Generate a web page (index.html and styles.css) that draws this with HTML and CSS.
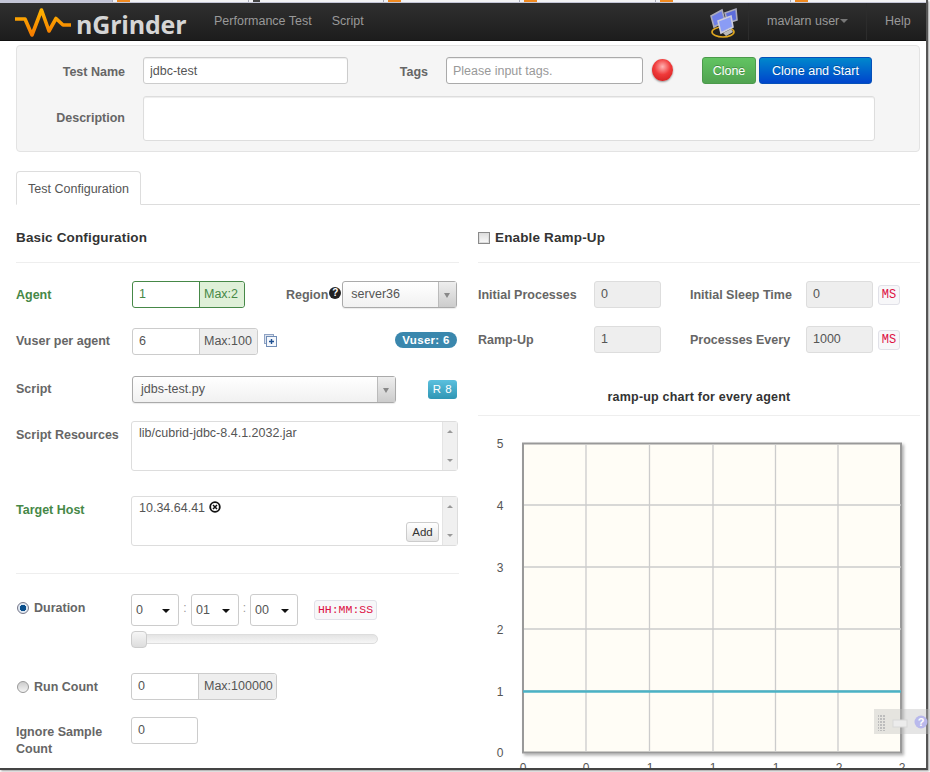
FILE: index.html
```html
<!DOCTYPE html>
<html lang="en">
<head>
<meta charset="utf-8">
<title>nGrinder</title>
<link rel="stylesheet" href="styles.css">
</head>
<body>
<div class="frame">
  <div class="browser-tabs">
    <span class="btab"><i class="fav"></i></span>
    <span class="btab"><i class="fav dark"></i></span>
    <span class="btab"><i class="fav"></i></span>
    <span class="btab"><i class="fav"></i></span>
    <span class="btab"><i class="fav"></i></span>
    <span class="btab"><i class="fav"></i></span>
  </div>
  <header class="navbar">
    <a class="brand">
      <svg class="logo" width="60" height="30" viewBox="0 0 60 30">
        <defs><linearGradient id="lg" x1="0" y1="0" x2="0" y2="1"><stop offset="0" stop-color="#ffb400"/><stop offset="1" stop-color="#f57c00"/></linearGradient></defs>
        <path d="M0 11H10L17 27L26.500 2L34 23L41 10.500L48 17H56" fill="none" stroke="url(#lg)" stroke-width="3.600" stroke-linejoin="round"/>
      </svg>
      <span class="brand-name">nGrinder</span>
    </a>
    <nav class="nav-links"><a>Performance Test</a><a>Script</a></nav>
    <div class="nav-right">
      <svg class="net-icon" width="32" height="32" viewBox="0 0 32 32">
        <ellipse cx="15" cy="25" rx="11" ry="5" fill="none" stroke="#e0a820" stroke-width="1.600"/>
        <path d="M3 9L14 3L17 14L6 20Z" fill="#6f7fe8" stroke="#aab" stroke-width="1.600"/>
        <path d="M17 6L28 2L29 13L20 16Z" fill="#5c6cdc" stroke="#aab" stroke-width="1.600"/>
        <path d="M10 14L23 9L25 20L13 26Z" fill="#8a9cf5" stroke="#ccd" stroke-width="1.600"/>
        <path d="M15 26L23 22L25 25L18 29Z" fill="#bbb"/>
      </svg>
      <a class="nav-user">mavlarn user<i class="caret"></i></a>
      <a class="nav-help">Help</a>
    </div>
  </header>
  <main class="content">
    <section class="well">
      <div class="well-row first">
        <label class="lbl well-lbl">Test Name</label>
        <input class="field name-field" value="jdbc-test">
        <label class="lbl tags-lbl">Tags</label>
        <input class="field tags-field" placeholder="Please input tags.">
        <span class="ball"></span>
        <button class="btn green">Clone</button>
        <button class="btn blue">Clone and Start</button>
      </div>
      <div class="well-row">
        <label class="lbl well-lbl desc-lbl">Description</label>
        <div class="field desc-field"></div>
      </div>
    </section>
    <div class="tabs"><a class="tab">Test Configuration</a></div>
    <div class="columns">
      <section class="col left">
        <h4 class="head">Basic Configuration</h4>
        <div class="row r-agent">
          <label class="lbl c1 ok">Agent</label>
          <div class="group ok"><span class="gi">1</span><span class="ga">Max:2</span></div>
          <label class="lbl region">Region</label><span class="help">?</span>
          <div class="select region-sel"><span>server36</span><b></b></div>
        </div>
        <div class="row r-vuser">
          <label class="lbl c1">Vuser per agent</label>
          <div class="group"><span class="gi">6</span><span class="ga">Max:100</span></div>
          <svg class="plus" width="13" height="13" viewBox="0 0 13 13"><rect x=".5" y=".5" width="9" height="9" fill="#dde3ee" stroke="#8fa3c4"/><rect x="2.500" y="2.500" width="10" height="10" fill="#f4f7fc" stroke="#6f8cb5"/><path d="M5 7.500H10M7.500 5V10" stroke="#1d4f91" stroke-width="1.400"/></svg>
          <span class="pill">Vuser: 6</span>
        </div>
        <div class="row r-script">
          <label class="lbl c1">Script</label>
          <div class="select script-sel"><span>jdbs-test.py</span><b></b></div>
          <span class="rev">R 8</span>
        </div>
        <div class="row r-res">
          <label class="lbl c1">Script Resources</label>
          <div class="listbox"><div class="list-text">lib/cubrid-jdbc-8.4.1.2032.jar</div><div class="sbar"><i class="up"></i><i class="down"></i></div></div>
        </div>
        <div class="row r-host">
          <label class="lbl c1 ok">Target Host</label>
          <div class="listbox"><div class="list-text">10.34.64.41 <svg class="x-icon" width="12" height="12" viewBox="0 0 12 12"><circle cx="6" cy="6" r="4.800" fill="none" stroke="#111" stroke-width="1.800"/><path d="M4 4L8 8M8 4L4 8" stroke="#111" stroke-width="1.500"/></svg></div><button class="add">Add</button><div class="sbar"><i class="up"></i><i class="down"></i></div></div>
        </div>
        <hr class="sep">
        <div class="row r-dur">
          <div class="c1 radio-lbl"><i class="radio on"></i><label class="lbl">Duration</label></div>
          <div class="dur-box">
            <div class="dur-row">
              <div class="mini"><span>0</span><b></b></div><span class="colon">:</span>
              <div class="mini"><span>01</span><b></b></div><span class="colon">:</span>
              <div class="mini"><span>00</span><b></b></div>
              <code class="code hms">HH:MM:SS</code>
            </div>
            <div class="slider"><i class="handle"></i></div>
          </div>
        </div>
        <div class="row r-run">
          <div class="c1 radio-lbl"><i class="radio"></i><label class="lbl">Run Count</label></div>
          <div class="group g-run"><span class="gi">0</span><span class="ga">Max:100000</span></div>
        </div>
        <div class="row r-ign">
          <label class="lbl c1 ign-lbl">Ignore Sample Count</label>
          <span class="box-input">0</span>
        </div>
      </section>
      <section class="col right">
        <h4 class="head ramp-head"><i class="check"></i>Enable Ramp-Up</h4>
        <div class="ramp-grid">
          <label class="lbl">Initial Processes</label><span class="box-input off">0</span>
          <label class="lbl">Initial Sleep Time</label><span class="box-input off">0</span><code class="code">MS</code>
          <label class="lbl">Ramp-Up</label><span class="box-input off">1</span>
          <label class="lbl">Processes Every</label><span class="box-input off">1000</span><code class="code">MS</code>
        </div>
        <h5 class="chart-title">ramp-up chart for every agent</h5>
        <svg class="chart" width="442" height="352" viewBox="0 0 442 352">
          <defs><filter id="sh" x="-2%" y="-2%" width="105%" height="105%"><feDropShadow dx="2" dy="2" stdDeviation="1.500" flood-color="#000" flood-opacity=".3"/></filter></defs>
          <rect x="45" y="27.500" width="378" height="309" fill="#fffdf6" stroke="#999" stroke-width="2" filter="url(#sh)"/>
          <g stroke="#ccc" stroke-width="1.300">
            <path d="M108 28V336M171.500 28V336M235 28V336M297.500 28V336M360 28V336"/>
            <path d="M46 89H423M46 151H423M46 213H423M46 275H423"/>
          </g>
          <path d="M45 275.500H423" stroke="#4bb2c5" stroke-width="2.400"/>
          <g class="tick" text-anchor="middle">
            <text x="22" y="32">5</text><text x="22" y="94">4</text><text x="22" y="156">3</text><text x="22" y="218">2</text><text x="22" y="280">1</text><text x="22" y="341">0</text>
            <text x="45" y="356">0</text><text x="108" y="356">0</text><text x="172" y="356">1</text><text x="235" y="356">1</text><text x="298" y="356">1</text><text x="361" y="356">2</text><text x="424" y="356">2</text>
          </g>
        </svg>
      </section>
    </div>
  </main>
</div>
<div class="float-bar">
  <svg width="56" height="25" viewBox="0 0 56 25">
    <defs><pattern id="dots" width="3" height="3" patternUnits="userSpaceOnUse"><rect width="2" height="2" fill="#bdbdbd"/></pattern></defs>
    <rect x="4" y="5" width="8" height="17" fill="url(#dots)"/>
    <rect x="19" y="11" width="14" height="7" fill="#ececec" stroke="#d8d8d8"/>
    <circle cx="47" cy="13" r="6.500" fill="#b9b9ec"/>
    <text x="47" y="17" class="q">?</text>
  </svg>
</div>
</body>
</html>
```
FILE: styles.css
```css
* { box-sizing: border-box; }
html, body { margin: 0; padding: 0; background: #fff; }
body { position: relative; width: 930px; height: 772px; overflow: hidden; font-family: "Liberation Sans", Arial, sans-serif; font-size: 12px; color: #555; }
.frame { position: relative; width: 928px; height: 770px; overflow: hidden; border-right: 2px solid #555; border-bottom: 2px solid #444; box-shadow: 1px 1px 2px #999; }

.browser-tabs { display: flex; height: 3px; padding-left: 112px; background: #c3c5d6; }
.btab { width: 143.500px; height: 2px; background: #f2f2f4; border-left: 1px solid #a9abb8; padding-left: 4px; }
.fav { display: block; width: 13px; height: 2px; background: #f08a20; }
.fav.dark { width: 7px; background: #444; }

.navbar { display: flex; align-items: flex-start; height: 38px; background: linear-gradient(#2f2f2f, #1d1d1d); border-bottom: 1px solid #111; }
.brand { display: flex; align-items: flex-start; width: 214px; padding: 4px 0 0 15px; }
.logo { display: block; flex: none; margin-top: 1px; }
.brand-name { margin-left: 1px; font-family: "Open Sans", sans-serif; font-weight: 700; font-size: 25px; line-height: 34px; letter-spacing: -.2px; color: #d5d5d5; }
.nav-links { display: flex; gap: 20px; padding-top: 10px; font-size: 12.500px; line-height: 16px; color: #999; }
.nav-right { display: flex; align-items: stretch; margin-left: auto; height: 37px; color: #999; font-size: 12.500px; }
.net-icon { margin: 4px 8px 0 0; }
.nav-user { display: block; width: 119px; padding: 10px 0 0 18px; line-height: 16px; border-left: 1px solid #2c2c2c; border-right: 1px solid #2c2c2c; }
.caret { display: inline-block; margin-left: 1px; vertical-align: 2px; border: 4px solid transparent; border-top-color: #777; border-bottom: 0; }
.nav-help { display: block; width: 59px; padding: 10px 0 0 18px; line-height: 16px; }

.content { padding: 4px 6px 0 16px; }
.well { height: 107px; width: 904px; padding: 11px 0 0; background: #f5f5f5; border: 1px solid #e3e3e3; border-radius: 4px; }
.well-row { display: flex; align-items: flex-start; }
.well-row.first { height: 39px; }
.lbl { font-size: 12.500px; font-weight: 700; color: #666; line-height: 16px; }
.well-lbl { width: 108px; padding-top: 7px; text-align: right; }
.desc-lbl { padding-top: 14px; }
.field { display: block; margin: 0; height: 27px; padding: 0 6px; border: 1px solid #ccc; border-radius: 3px; background: #fff; font: 12.500px "Liberation Sans", Arial, sans-serif; color: #555; box-shadow: inset 0 1px 1px rgba(0,0,0,.075); outline: 0; }
.field::placeholder { color: #999; opacity: 1; }
.name-field { width: 205px; margin-left: 18px; }
.tags-lbl { width: 80px; padding-top: 7px; text-align: right; color: #666; }
.tags-field { width: 197px; margin-left: 18px; border-color: #aaa; }
.ball { flex: none; width: 21px; height: 22px; margin: 2px 0 0 9px; border-radius: 50%; background: radial-gradient(circle at 50% 35%, #ffb4b4 0, #f03a3a 45%, #c91818 100%); box-shadow: 0 1px 2px rgba(0,0,0,.4); }
.btn { height: 27px; margin: 0; padding: 0; border-radius: 3px; font: 12.500px "Liberation Sans", Arial, sans-serif; color: #fff; text-shadow: 0 -1px 0 rgba(0,0,0,.25); }
.btn.green { width: 54px; margin-left: 29px; background: linear-gradient(#62c462, #51a351); border: 1px solid #4b9a4b; }
.btn.blue { width: 113px; margin-left: 3px; background: linear-gradient(#0088cc, #0044cc); border: 1px solid #0550b8; }
.desc-field { width: 732px; height: 45px; margin-left: 18px; border-color: #ddd; }

.tabs { height: 34px; margin-top: 19px; width: 904px; border-bottom: 1px solid #ddd; }
.tab { display: block; width: 125px; height: 34px; padding-top: 9px; text-align: center; font-size: 12.500px; line-height: 16px; color: #555; background: #fff; border: 1px solid #ddd; border-bottom: 1px solid #fff; border-radius: 4px 4px 0 0; }

.columns { display: flex; gap: 19px; width: 904px; }
.col { flex: none; }
.col.left { width: 443px; }
.col.right { width: 442px; }
.head { display: flex; align-items: center; height: 58px; margin: 0; padding-top: 9px; border-bottom: 1px solid #eee; font-size: 13.500px; font-weight: 700; color: #333; line-height: 16px; letter-spacing: .15px; }
.ramp-head { gap: 5px; }
.check { flex: none; width: 12px; height: 12px; border: 1px solid #8a8a8a; background: linear-gradient(#ddd, #fafafa); box-shadow: inset 0 0 0 1px #ddd; }

.row { display: flex; align-items: flex-start; }
.c1 { flex: none; width: 116px; }
.r-agent { margin-top: 18px; height: 47px; }
.r-agent > .c1 { padding-top: 6px; }
.ok { color: #468847; }
.group { display: flex; height: 27px; border: 1px solid #ccc; border-radius: 3px; background: #fff; font-size: 12.500px; line-height: 25px; color: #555; }
.group.ok { border-color: #468847; color: #468847; width: 113px; }
.gi { width: 66px; padding-left: 6px; }
.ga { flex: 1; padding-left: 4px; background: #eee; border-left: 1px solid #ccc; border-radius: 0 3px 3px 0; white-space: nowrap; }
.group.ok .ga { background: #dff0d8; border-left-color: #468847; }
.region { margin-left: 41px; padding-top: 6px; }
.help { flex: none; width: 12px; height: 12px; margin: 6px 1px 0 1px; border-radius: 50%; background: #222; color: #fff; font-size: 10px; font-weight: 700; line-height: 12px; text-align: center; }
.select { display: flex; height: 27px; border: 1px solid #aaa; border-radius: 3px; background: linear-gradient(#fff, #f1f1f1); font-size: 12.500px; line-height: 25px; color: #555; box-shadow: 0 1px 1px rgba(0,0,0,.08); }
.select span { flex: 1; padding-left: 8px; }
.select b { position: relative; flex: none; width: 18px; background: linear-gradient(#eee, #ccc); border-left: 1px solid #bbb; }
.select b::after { content: ""; position: absolute; top: 11px; left: 5px; border: 3.500px solid transparent; border-top: 5px solid #888; border-bottom: 0; }
.region-sel { width: 115px; }
.r-vuser { height: 48px; }
.r-vuser > .c1 { padding-top: 5px; }
.r-vuser .group { width: 126px; }
.plus { flex: none; margin: 6px 0 0 6px; }
.pill { flex: none; width: 62px; height: 16px; margin: 4px 0 0 118px; border-radius: 8px; background: #3a87ad; color: #fff; font-size: 11.500px; font-weight: 700; line-height: 16px; text-align: center; letter-spacing: .3px; }
.r-script { height: 45px; }
.r-script > .c1 { padding-top: 5px; }
.script-sel { width: 264px; }
.rev { flex: none; width: 29px; height: 19px; margin: 4px 0 0 32px; border-radius: 3px; background: linear-gradient(#5bc0de, #2f96b4); color: #fff; font-size: 11.500px; line-height: 19px; text-align: center; letter-spacing: .5px; }
.r-res { height: 75px; }
.r-res > .c1, .r-host > .c1 { padding-top: 6px; width: 115px; }
.r-host { height: 49px; }
.listbox { position: relative; display: flex; width: 327px; height: 50px; border: 1px solid #ddd; border-radius: 3px; background: #fff; font-size: 12.500px; color: #555; }
.list-text { flex: 1; padding: 3px 7px; line-height: 16px; }
.x-icon { vertical-align: -1px; }
.sbar { position: relative; flex: none; width: 15px; background: #f0f0f0; border-left: 1px solid #e4e4e4; }
.sbar i { position: absolute; left: 4px; border: 3px solid transparent; }
.sbar .up { top: 8px; border-bottom: 3px solid #999; border-top: 0; }
.sbar .down { bottom: 8px; border-top: 3px solid #999; border-bottom: 0; }
.add { position: absolute; right: 18px; bottom: 3px; width: 33px; height: 20px; padding: 0; border: 1px solid #ccc; border-radius: 3px; background: linear-gradient(#fff, #e6e6e6); font: 11.500px "Liberation Sans", Arial, sans-serif; color: #333; }
.sep { height: 1px; margin: 28px 0 0; border: 0; background: #eee; }
.r-dur { margin-top: 20px; height: 79px; }
.radio-lbl { display: flex; align-items: center; gap: 5px; width: 115px; height: 16px; margin-top: 6px; padding-left: 1px; }
.radio { flex: none; width: 12px; height: 12px; border-radius: 50%; border: 1px solid #999; background: linear-gradient(#ccc, #f4f4f4); }
.radio.on { background: radial-gradient(circle, #0a4f8c 0 3px, #dfe8f2 3.500px); border-color: #778; }
.dur-box { width: 249px; }
.dur-row { display: flex; align-items: flex-start; }
.mini { position: relative; display: flex; width: 48px; height: 32px; border: 1px solid #ccc; border-radius: 3px; background: #fff; font-size: 12.500px; line-height: 30px; color: #555; }
.mini span { padding-left: 4px; }
.mini b { position: absolute; top: 14px; right: 8px; border: 4px solid transparent; border-top: 4px solid #111; border-bottom: 0; }
.colon { width: 12px; padding-top: 6px; text-align: center; font-size: 12px; line-height: 16px; color: #999; }
.colon + .mini + .colon { width: 11px; }
.code { display: block; flex: none; padding: 0 2px; height: 20px; border: 1px solid #e1e1e8; border-radius: 3px; background: #f7f7f9; color: #d14; font: 11.500px/18px "Liberation Mono", monospace; text-align: center; }
.hms { width: 63px; margin: 6px 0 0 16px; }
.slider { position: relative; width: 247px; height: 10px; margin-top: 8px; border: 1px solid #ddd; border-radius: 5px; background: linear-gradient(#e4e4e4, #f6f6f6); }
.handle { position: absolute; left: -1px; top: -4px; width: 16px; height: 17px; border: 1px solid #ccc; border-radius: 4px; background: linear-gradient(#f6f6f6, #ddd); }
.r-run { height: 44px; }
.g-run { width: 146px; }
.g-run .ga { padding-left: 5px; }
.r-ign { align-items: flex-start; }
.ign-lbl { width: 115px; padding-top: 7px; line-height: 17px; padding-right: 10px; }
.box-input { display: block; flex: none; width: 67px; height: 27px; padding-left: 6px; border: 1px solid #ccc; border-radius: 3px; background: #fff; font-size: 12.500px; line-height: 25px; color: #555; }
.box-input.off { background: #eee; border-color: #ddd; }

.ramp-grid { display: grid; grid-template-columns: 116px 67px 29px 116px 67px auto; grid-auto-rows: 27px; row-gap: 18px; margin-top: 18px; align-items: center; justify-items: start; }
.ramp-grid .box-input + .lbl { grid-column: 4; }
.ramp-grid .code { width: 22px; margin-left: 5px; padding: 0; font-size: 12px; }
.chart-title { margin: 36px 0 0; height: 27px; border-bottom: 1px solid #eee; text-align: center; font-size: 12.500px; font-weight: 700; color: #333; line-height: 16px; letter-spacing: .2px; }
.chart { display: block; overflow: visible; }
.tick { font-size: 12px; fill: #555; font-family: "Liberation Sans", Arial, sans-serif; }
.float-bar { position: absolute; left: 874px; top: 709px; width: 56px; height: 25px; background: rgba(190,190,190,.4); }
.float-bar svg { display: block; }
.q { font: 700 11px "Liberation Sans", Arial, sans-serif; fill: #fff; text-anchor: middle; }
```
